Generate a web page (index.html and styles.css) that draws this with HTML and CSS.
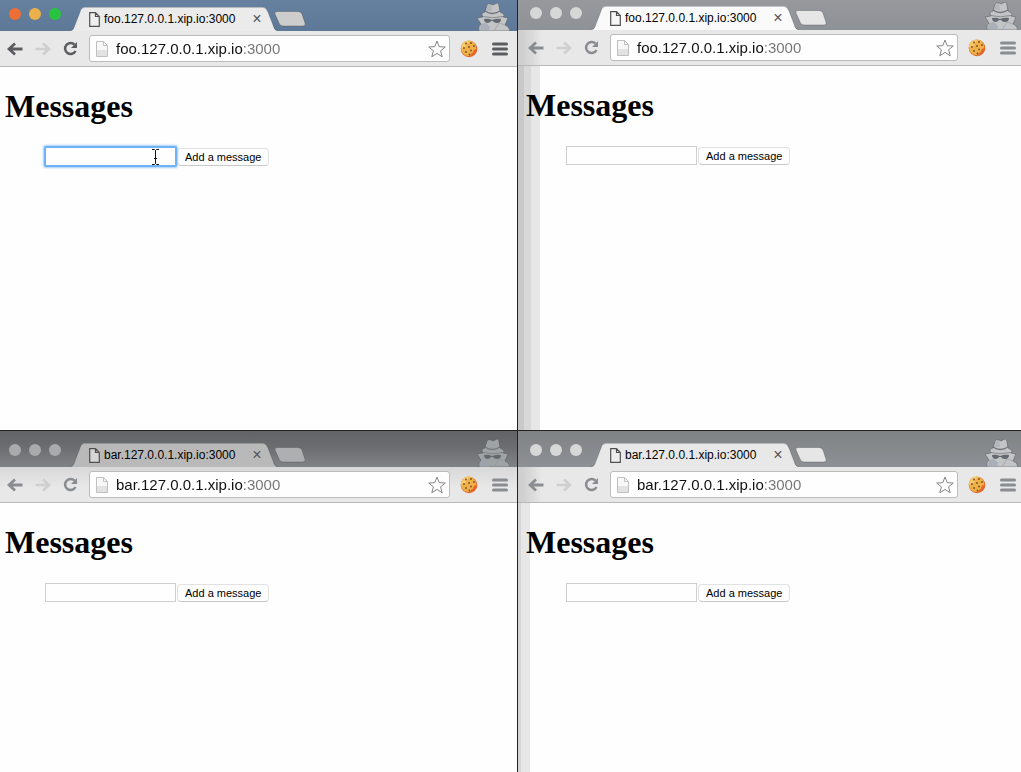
FILE: index.html
```
<!DOCTYPE html>
<html lang="en">
<head>
<meta charset="utf-8">
<title>Messages</title>
<link rel="stylesheet" href="styles.css">
</head>
<body>
<svg class="defs" aria-hidden="true">
  <symbol id="tab" viewBox="0 0 208 24" preserveAspectRatio="none"><path class="tab-fill" d="M0 24C3 24 4 21 5 18L10 5C11 1 13 0 16 0H191C195 0 196 1 198 5L203 18C204 21 205 24 208 24Z"/><path d="M0 23.5C3 23.5 4 21 5 18L10 5C11 1 13 .5 16 .5H191C195 .5 196 1 198 5L203 18C204 21 205 23.500 208 23.500" fill="none" stroke="#404850" stroke-opacity=".3"/></symbol>
  <symbol id="newtab" viewBox="0 0 32 16"><path class="newtab-fill" d="M3 .5H24Q27 .5 28 3L31 12Q32 15 29 15H9Q6 15 5 12L1 3Q0 .5 3 .5Z" stroke="#444" stroke-opacity=".35"/></symbol>
  <symbol id="doc" viewBox="0 0 11 15"><path d="M.7.7H6.500L10.300 4.500V14.300H.7ZM6.500.7V4.500H10.300" fill="#f4f4f4" fill-opacity=".5" stroke="#505050" stroke-width="1.200"/></symbol>
  <symbol id="file" viewBox="0 0 12 16"><path d="M.5.5H7.500L11.500 4.500V15.500H.5Z" fill="#f8f8f8" stroke="#c0c0c0"/><path d="M1 9H11V15H1Z" fill="#e2e2e2"/><path d="M7.500.5V4.500H11.500" fill="none" stroke="#c0c0c0"/></symbol>
  <symbol id="back" viewBox="0 0 16 14"><path d="M8 1.500L2 7L8 12.500M2.500 7H15.500" fill="none" stroke="currentColor" stroke-width="2.800"/></symbol>
  <symbol id="forward" viewBox="0 0 16 14"><path d="M8 1.500L14 7L8 12.500M13.500 7H.5" fill="none" stroke="#cfcfcf" stroke-width="2.600"/></symbol>
  <symbol id="reload" viewBox="0 0 15 15"><path d="M11.500 3.600A5.500 5.500 0 1 0 12.500 10" fill="none" stroke="currentColor" stroke-width="2.500"/><path d="M14 1V7H8Z" fill="currentColor"/></symbol>
  <symbol id="star" viewBox="0 0 18 18"><path d="M9 1L11.200 6.700L17.300 7L12.600 10.800L14.200 16.800L9 13.400L3.800 16.800L5.400 10.800L.7 7L6.800 6.700Z" fill="#fff" stroke="#858585"/></symbol>
  <symbol id="cookie" viewBox="0 0 18 18"><circle cx="9" cy="9" r="8.300" fill="#e06a2c"/><circle cx="8.500" cy="8.300" r="7.700" fill="#efb048"/><path d="M2 5Q5 0 10 1Q7 3 6 7Q4 9 1 8Z" fill="#f7c968"/><path d="M10 16Q12 12 13 13Q13 9 17 9Q16 16 10 16Z" fill="#e8652a"/><g fill="#76502e"><circle cx="6" cy="3.500" r=".9"/><circle cx="11" cy="3" r=".9"/><circle cx="14" cy="6" r=".9"/><circle cx="9" cy="7" r=".9"/><circle cx="4" cy="8" r=".9"/><circle cx="6" cy="12" r=".9"/><circle cx="11" cy="10.500" r=".9"/><circle cx="9.500" cy="14.500" r=".9"/></g></symbol>
  <symbol id="menu" viewBox="0 0 16 14"><path d="M1.500 2H14.500M1.500 7H14.500M1.500 12H14.500" stroke="currentColor" stroke-width="3" stroke-linecap="round"/></symbol>
  <symbol id="spy" viewBox="0 0 34 28"><path d="M8 9L10 2Q11 0 14 1L16 2L20 0Q22 0 22 3L23 9Q28 11 27 13L26 14L31 15L28 22Q32 23 33 28H2Q1 23 4 21L0 15L6 14L5 12Q4 10 8 9Z" fill="var(--spy)" stroke="#50565c" stroke-opacity=".5"/><path d="M10 3L14 1L15 8L9 8Z" fill="#9ca4ab" fill-opacity=".4"/><path d="M8 8Q15 13 23 8" fill="none" stroke="#74787c" stroke-width="1.300"/><path d="M6 13.500Q15 16 26 13.500" fill="none" stroke="#74787c" stroke-opacity=".7"/><path d="M7 16Q11 15 15 17Q20 15 24 16Q24 20 20 20Q17 20 16 18H14Q13 20 10 20Q7 19 7 16Z" fill="#63696e"/><path d="M4 21L9 20L13 24L12 28H3Z" fill="#99a4ad" fill-opacity=".6"/><path d="M28 22L22 20L17 28" fill="none" stroke="#8c9298" stroke-opacity=".5"/></symbol>
</svg>
<main class="desktop">
  <section class="window active" aria-label="foo window, active">
    <header class="titlebar">
      <div class="lights"><button class="light close" aria-label="Close window"></button><button class="light minimize" aria-label="Minimize window"></button><button class="light expand" aria-label="Zoom window"></button></div>
      <div class="tab"><svg class="tab-shape"><use href="#tab"/></svg><svg class="doc"><use href="#doc"/></svg><span class="tab-title">foo.127.0.0.1.xip.io:3000</span><button class="tab-close" aria-label="Close tab">×</button></div>
      <button class="newtab" aria-label="New tab"><svg><use href="#newtab"/></svg></button>
      <svg class="spy"><use href="#spy"/></svg>
    </header>
    <nav class="toolbar">
      <button class="tool" aria-label="Back"><svg class="arrow"><use href="#back"/></svg></button><button class="tool" aria-label="Forward"><svg class="arrow"><use href="#forward"/></svg></button><button class="tool" aria-label="Reload"><svg class="reload"><use href="#reload"/></svg></button>
      <div class="omnibox"><svg class="file"><use href="#file"/></svg><input class="url" type="text" aria-label="Address" value="foo.127.0.0.1.xip.io:3000"><button class="tool" aria-label="Bookmark"><svg class="star"><use href="#star"/></svg></button></div>
      <div class="extras"><button class="tool" aria-label="Cookies"><svg class="cookie"><use href="#cookie"/></svg></button><button class="tool" aria-label="Menu"><svg class="menu"><use href="#menu"/></svg></button></div>
    </nav>
    <article class="page"><h1>Messages</h1>
      <form class="message-form"><span class="field"><input class="message focused" type="text" aria-label="Message"><svg class="ibeam" viewBox="0 0 7 16"><path d="M0 .5H2.500L3.500 1.500L4.500 .5H7M3.500 1.500V14.500M0 15.500H2.500L3.500 14.500L4.500 15.500H7M2 9.500H5" fill="none" stroke="#111"/></svg></span><button class="add" type="button">Add a message</button></form>
    </article>
  </section>
  <section class="window right upper" aria-label="foo window">
    <header class="titlebar">
      <div class="lights"><button class="light" aria-label="Close window"></button><button class="light" aria-label="Minimize window"></button><button class="light" aria-label="Zoom window"></button></div>
      <div class="tab"><svg class="tab-shape"><use href="#tab"/></svg><svg class="doc"><use href="#doc"/></svg><span class="tab-title">foo.127.0.0.1.xip.io:3000</span><button class="tab-close" aria-label="Close tab">×</button></div>
      <button class="newtab" aria-label="New tab"><svg><use href="#newtab"/></svg></button>
      <svg class="spy"><use href="#spy"/></svg>
    </header>
    <nav class="toolbar">
      <button class="tool" aria-label="Back"><svg class="arrow"><use href="#back"/></svg></button><button class="tool" aria-label="Forward"><svg class="arrow"><use href="#forward"/></svg></button><button class="tool" aria-label="Reload"><svg class="reload"><use href="#reload"/></svg></button>
      <div class="omnibox"><svg class="file"><use href="#file"/></svg><input class="url" type="text" aria-label="Address" value="foo.127.0.0.1.xip.io:3000"><button class="tool" aria-label="Bookmark"><svg class="star"><use href="#star"/></svg></button></div>
      <div class="extras"><button class="tool" aria-label="Cookies"><svg class="cookie"><use href="#cookie"/></svg></button><button class="tool" aria-label="Menu"><svg class="menu"><use href="#menu"/></svg></button></div>
    </nav>
    <article class="page"><h1>Messages</h1>
      <form class="message-form"><span class="field"><input class="message" type="text" aria-label="Message"></span><button class="add" type="button">Add a message</button></form>
    </article>
  </section>
  <section class="window lower shaded" aria-label="bar window, left">
    <header class="titlebar">
      <div class="lights"><button class="light" aria-label="Close window"></button><button class="light" aria-label="Minimize window"></button><button class="light" aria-label="Zoom window"></button></div>
      <div class="tab"><svg class="tab-shape"><use href="#tab"/></svg><svg class="doc"><use href="#doc"/></svg><span class="tab-title">bar.127.0.0.1.xip.io:3000</span><button class="tab-close" aria-label="Close tab">×</button></div>
      <button class="newtab" aria-label="New tab"><svg><use href="#newtab"/></svg></button>
      <svg class="spy"><use href="#spy"/></svg>
    </header>
    <nav class="toolbar">
      <button class="tool" aria-label="Back"><svg class="arrow"><use href="#back"/></svg></button><button class="tool" aria-label="Forward"><svg class="arrow"><use href="#forward"/></svg></button><button class="tool" aria-label="Reload"><svg class="reload"><use href="#reload"/></svg></button>
      <div class="omnibox"><svg class="file"><use href="#file"/></svg><input class="url" type="text" aria-label="Address" value="bar.127.0.0.1.xip.io:3000"><button class="tool" aria-label="Bookmark"><svg class="star"><use href="#star"/></svg></button></div>
      <div class="extras"><button class="tool" aria-label="Cookies"><svg class="cookie"><use href="#cookie"/></svg></button><button class="tool" aria-label="Menu"><svg class="menu"><use href="#menu"/></svg></button></div>
    </nav>
    <article class="page"><h1>Messages</h1>
      <form class="message-form"><span class="field"><input class="message" type="text" aria-label="Message"></span><button class="add" type="button">Add a message</button></form>
    </article>
  </section>
  <section class="window right lower" aria-label="bar window, right">
    <header class="titlebar">
      <div class="lights"><button class="light" aria-label="Close window"></button><button class="light" aria-label="Minimize window"></button><button class="light" aria-label="Zoom window"></button></div>
      <div class="tab"><svg class="tab-shape"><use href="#tab"/></svg><svg class="doc"><use href="#doc"/></svg><span class="tab-title">bar.127.0.0.1.xip.io:3000</span><button class="tab-close" aria-label="Close tab">×</button></div>
      <button class="newtab" aria-label="New tab"><svg><use href="#newtab"/></svg></button>
      <svg class="spy"><use href="#spy"/></svg>
    </header>
    <nav class="toolbar">
      <button class="tool" aria-label="Back"><svg class="arrow"><use href="#back"/></svg></button><button class="tool" aria-label="Forward"><svg class="arrow"><use href="#forward"/></svg></button><button class="tool" aria-label="Reload"><svg class="reload"><use href="#reload"/></svg></button>
      <div class="omnibox"><svg class="file"><use href="#file"/></svg><input class="url" type="text" aria-label="Address" value="bar.127.0.0.1.xip.io:3000"><button class="tool" aria-label="Bookmark"><svg class="star"><use href="#star"/></svg></button></div>
      <div class="extras"><button class="tool" aria-label="Cookies"><svg class="cookie"><use href="#cookie"/></svg></button><button class="tool" aria-label="Menu"><svg class="menu"><use href="#menu"/></svg></button></div>
    </nav>
    <article class="page"><h1>Messages</h1>
      <form class="message-form"><span class="field"><input class="message" type="text" aria-label="Message"></span><button class="add" type="button">Add a message</button></form>
    </article>
  </section>
</main>
</body>
</html>
```
FILE: styles.css
```
* { box-sizing: border-box; }
body { margin: 0; font-family: "Liberation Sans", Arial, sans-serif; background: #fefefe; }
button { border: 0; padding: 0; background: none; font-family: inherit; }
svg { display: block; flex: none; }
.defs { position: absolute; width: 0; height: 0; }

.desktop {
  display: grid;
  grid-template-columns: 517fr 504fr;
  grid-template-rows: 430fr 342fr;
  min-height: 100vh;
}
.window {
  --left: 0px;
  --right: 4px;
  --title: linear-gradient(#97999d, #8e9196);
  --bar: #e8e8e8;
  --tab: #fafafa;
  --newtab: #e6e6e6;
  --icon: #898c90;
  --spy: #c2c4c6;
  display: flex;
  flex-direction: column;
  min-width: 0;
  background: #fefefe;
}
.active {
  --title: linear-gradient(#66809f, #5e7897);
  --tab: #ebebeb;
  --newtab: #cdcdcd;
  --icon: #5a5c60;
}
.right { --left: 3px; --right: 0px; border-left: 1px solid #222; }
.lower {
  --title: linear-gradient(#808386, #8d9094);
  --tab: #e8e8e8;
  border-top: 1px solid #222;
}
.shaded {
  --title: linear-gradient(#626365, #6c6d70 45%, #808386);
  --bar: linear-gradient(#d8d8d8, #e8e8e8 60%);
  --tab: #b9b9b9;
  --newtab: #adafb0;
  --spy: #a0a3a5;
}

.titlebar {
  display: flex;
  align-items: flex-end;
  height: 31px;
  padding: 0 calc(var(--right) + 2px) 0 calc(var(--left) + 9px);
  background: var(--title);
}
.upper .titlebar { height: 30px; }
.lower .titlebar { height: 36px; }
.lights { display: flex; gap: 8px; padding-bottom: 11px; margin-right: 9px; }
.light { width: 12px; height: 12px; border-radius: 50%; background: #d6d7d7; }
.shaded .light { background: #a8aaab; }
.close { background: #ed6f35; }
.minimize { background: #eab04b; }
.expand { background: #28c440; }
.tab {
  position: relative;
  display: flex;
  align-items: center;
  width: 208px;
  height: 24px;
  padding: 0 16px 0 19px;
}
.tab-shape { position: absolute; inset: 0; width: 100%; height: 100%; }
.tab-fill { fill: var(--tab); }
.doc, .tab-title, .tab-close { position: relative; }
.doc { width: 11px; height: 15px; margin-right: 4px; }
.tab-title { flex: 1; font-size: 12px; line-height: 16px; white-space: nowrap; }
.tab-close { width: 10px; font-size: 16px; line-height: 16px; color: #555; }
.newtab { padding: 0 0 4px; margin: 0 auto 0 -4px; }
.newtab svg { width: 32px; height: 16px; }
.newtab-fill { fill: var(--newtab); }
.spy { width: 34px; height: 28px; }

.toolbar {
  display: flex;
  align-items: center;
  gap: 12px;
  height: 36px;
  padding: 0 calc(var(--right) + 5px) 0 calc(var(--left) + 7px);
  border-bottom: 1px solid #b8b8b8;
  background: var(--bar);
  color: var(--icon);
}
.tool { color: inherit; }
.arrow { width: 16px; height: 14px; }
.reload { width: 15px; height: 15px; }
.cookie, .star { width: 18px; height: 18px; }
.menu { width: 16px; height: 14px; }
.omnibox {
  flex: 1;
  display: flex;
  align-items: center;
  min-width: 0;
  height: 27px;
  margin-left: -1px;
  padding: 0 3px 0 6px;
  border: 1px solid #bcbcbc;
  border-radius: 3px;
  background: #fefefe;
}
.extras { display: flex; align-items: center; gap: 14px; margin-left: -2px; }
.file { width: 12px; height: 16px; margin-right: 8px; }
.url {
  flex: 1;
  min-width: 0;
  height: 24px;
  padding: 0;
  border: 0;
  font-family: inherit;
  font-size: 15px;
  color: #111;
  caret-color: #111;
  background: linear-gradient(90deg, #111 127px, #747474 127px);
  background-clip: text;
  -webkit-background-clip: text;
  -webkit-text-fill-color: transparent;
}

.page { flex: 1; padding: 21px 5px 8px calc(var(--left) + 5px); }
.right .page { padding-left: 8px; }
.right.upper .page { background: linear-gradient(90deg, #c9c9c9 6px, #d8d8d8 6px 13px, #e7e7e7 13px 22px, transparent 22px); }
.right.lower .page { background: linear-gradient(90deg, #d6d6d6 3px, #e7e7e7 3px 12px, transparent 12px); }
.right .toolbar { background: linear-gradient(90deg, #cfcfcf 4px, #dadada 14px, #e8e8e8 24px); }
h1 { margin: 0; font: bold 32px/37px "Liberation Serif", "Times New Roman", serif; color: #000; }
.message-form { display: flex; align-items: center; gap: 1px; margin-top: 22px; padding-left: 40px; }
.field { position: relative; display: flex; }
.message { width: 131px; height: 19px; padding: 1px 3px; border: 1px solid #cfcfcf; background: #fefefe; font-size: 11px; }
.focused { border-color: #6fb2f5; border-radius: 1px; box-shadow: 0 0 0 1px #6fb2f5, 0 0 2px 2px #a4cff8; }
.ibeam { position: absolute; left: 107px; top: 2px; width: 7px; height: 16px; }
.add {
  height: 18px;
  padding: 1px 7px 0;
  border: 1px solid #e2e2e2;
  border-bottom-color: #c9c9c9;
  border-radius: 4px;
  background: #fefefe;
  font-size: 11px;
  line-height: 15px;
  color: #000;
}
```
